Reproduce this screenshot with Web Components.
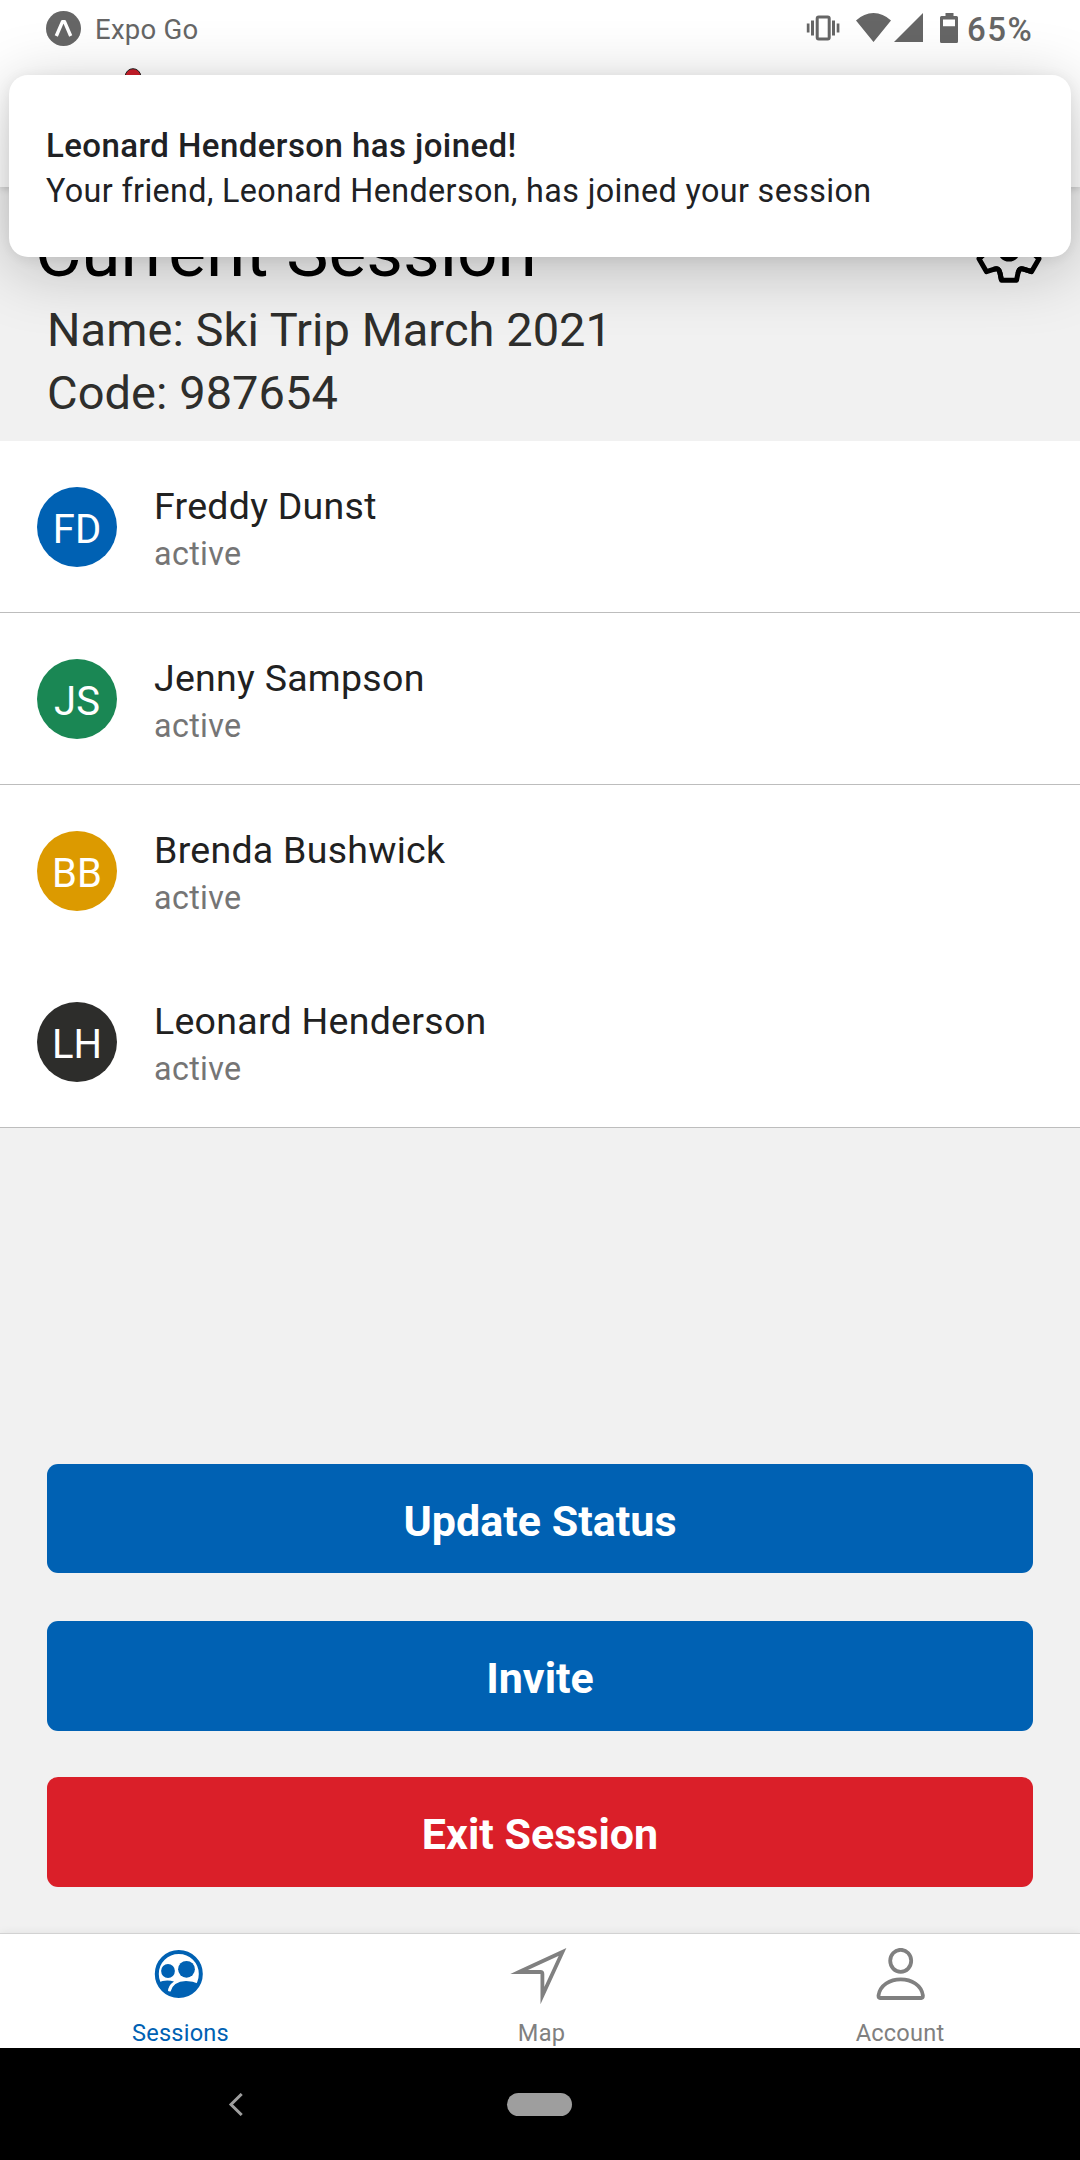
<!DOCTYPE html>
<html lang="en">
<head>
<meta charset="utf-8">
<title>Current Session</title>
<style>
html,body{margin:0;padding:0}
body{width:1080px;height:2160px;overflow:hidden;font-family:Roboto,"Liberation Sans",sans-serif;background:#f1f1f1}
</style>
</head>
<body>
<session-app></session-app>
<script>
const define = (name, html) => customElements.define(name, class extends HTMLElement {
  constructor() {
    super();
    const t = document.createElement('template');
    t.innerHTML = html;
    this.attachShadow({mode: 'open'}).appendChild(t.content.cloneNode(true));
  }
});

define('status-bar', `
<style>
:host{display:flex;height:75px;box-sizing:border-box;padding:0 47px 0 46px;align-items:flex-start;color:#666}
.app{display:flex;align-items:flex-start;gap:14px;font-size:27.5px;line-height:32px;letter-spacing:.25px}
.app svg{margin-top:11px}.app span{margin-top:14px}
.icons{margin-left:auto;margin-top:10px}
.pct{margin:12px 0 0 9px;font-size:33px;line-height:36px;font-weight:500;width:66px;letter-spacing:1.5px;white-space:nowrap}
svg{display:block}
</style>
<div class="app">
<svg width="35" height="35" viewBox="0 0 35 35"><circle cx="17.5" cy="17.5" r="17.5" fill="#666"/><path d="M10.3 25 16.4 10.8H18.6L24.7 25" fill="none" stroke="#fff" stroke-width="3.4" stroke-linejoin="round"/></svg>
<span>Expo Go</span></div>
<svg class="icons" width="152" height="35" viewBox="806 10 152 35" fill="#666">
<rect x="817.2" y="17" width="12" height="22" rx="1.5" fill="none" stroke="#666" stroke-width="3"/>
<path d="M811 20.500h3v15h-3zM832 20.500h3v15h-3zM806.800 23.500h2.700v9h-2.700zM836.700 23.500h2.700v9h-2.700z"/>
<path d="M873.500 42 856 20.500Q864 13 873.500 13T891 20.500zM894 42 923 13V42z"/>
<path fill-rule="evenodd" d="M945.500 13h8v3h3Q958 16 958 17.500V41.500Q958 43 956.500 43H941.500Q940 43 940 41.500V17.500Q940 16 941.500 16h4zM943 19.500V26.300H955V19.500z"/>
</svg>
<span class="pct">65%</span>`);

define('toast-card', `
<style>
:host{display:block;box-sizing:border-box;position:absolute;left:9px;top:75px;width:1062px;height:182px;border-radius:19px;background:#fff;padding:50px 37px;color:#202124;white-space:nowrap;box-shadow:0 12px 66px rgba(0,0,0,.23),0 2px 14px rgba(0,0,0,.07)}
.t{font-size:33px;font-weight:500;line-height:42px;letter-spacing:.43px}
.b{font-size:32.3px;line-height:48px;letter-spacing:.38px}
</style>
<div class="t"><slot name="title"></slot></div><div class="b"><slot></slot></div>`);

define('gear-icon', `
<style>:host{display:block}svg{display:block}</style>
<svg width="70" height="70" viewBox="-35 -35 70 70" fill="none" stroke="#000" stroke-width="5" stroke-linejoin="round">
<defs><path id="k" d="M-15.400 19.300C-11.500 18.100-10 19-9 23L-7.500 30.300H7.500L9 23C10 19 11.500 18.100 15.400 19.300L22.500 21.700"/></defs>
<use href="#k"/><use href="#k" transform="rotate(60)"/><use href="#k" transform="rotate(120)"/><use href="#k" transform="rotate(180)"/><use href="#k" transform="rotate(240)"/><use href="#k" transform="rotate(300)"/><circle r="9"/></svg>`);

define('session-header', `
<style>
:host{display:block;height:254px;box-sizing:border-box;padding-top:20px;color:#2e2e2c}
.top{display:flex;justify-content:space-between;height:91px;padding:0 36px 0 35px;color:#000}
.h{font-size:71.2px;line-height:82px;margin-top:4px;white-space:nowrap}
gear-icon{margin-top:8px}
.l{font-size:47px;line-height:63px;padding-left:47px;letter-spacing:.05px}
</style>
<div class="top"><div class="h">Current Session</div><gear-icon></gear-icon></div>
<div class="l"><slot name="name"></slot></div><div class="l"><slot name="code"></slot></div>`);

define('member-row', `
<style>
:host{display:flex;height:172px;box-sizing:border-box;background:#fff;padding:0 37px;align-items:flex-start;gap:37px;border-bottom:1px solid var(--line,#bdbdbd)}
.a{width:80px;height:80px;margin-top:46px;border-radius:50%;background:var(--c);color:#fff;font-size:40px;line-height:85px;text-align:center}
.x{padding-top:41px;white-space:nowrap}
.n{font-size:37.5px;line-height:48px;color:#212121;letter-spacing:.27px}
.s{font-size:32.3px;line-height:47px;margin-top:1px;color:#757575;letter-spacing:.35px}
</style>
<div class="a"><slot name="initials"></slot></div><div class="x"><div class="n"><slot></slot></div><div class="s">active</div></div>`);

define('action-button', `
<style>
:host{display:block;height:110px;border-radius:11px;background:var(--c,#0061b3);color:#fff;text-align:center;font-weight:700;font-size:43px;line-height:115px}
</style><slot></slot>`);

define('tab-item', `
<style>
:host{display:flex;flex-direction:column;align-items:center;width:360px;color:var(--c,#808080);font-size:23.600px;line-height:28px}
.i{height:70px;padding-top:14px;box-sizing:border-box}
.l{margin-top:15px;padding-left:var(--nudge,0px);letter-spacing:.2px}
</style><div class="i"><slot name="icon"></slot></div><div class="l"><slot></slot></div>`);

define('nav-bar', `
<style>
:host{display:flex;height:112px;background:#000;padding-left:228px;align-items:flex-start;box-sizing:border-box}
svg{display:block;margin-top:45px}
.p{width:65px;height:23px;border-radius:11.500px;background:#9e9e9e;margin:45px 0 0 263px}
</style>
<svg width="16" height="23" viewBox="0 0 16 23"><path d="M13.700 1 3 11.500 13.700 22" fill="none" stroke="#9e9e9e" stroke-width="3"/></svg><div class="p"></div>`);

define('session-app', `
<style>
:host{display:flex;flex-direction:column;position:relative;width:1080px;height:2160px;background:#f1f1f1;overflow:hidden}
.head{height:187px;background:#fff;box-shadow:0 1px 8px rgba(0,0,0,.2);box-sizing:border-box}
.logo{display:block;margin:-7px 0 0 124px}
member-row{flex:none}
member-row:nth-of-type(3){height:171px}
.actions{display:flex;flex-direction:column;padding:336px 47px 0;flex:1}
action-button:nth-of-type(1){height:109px;margin-bottom:48px}
action-button:nth-of-type(2){margin-bottom:46px}
.tabs{display:flex;height:114px;background:#fff;border-top:1px solid #d2d2d2;box-shadow:0 -1px 8px rgba(0,0,0,.06)}
svg{display:block}
</style>
<div class="head"><status-bar></status-bar>
<svg class="logo" width="18" height="18" viewBox="0 0 18 18"><circle cx="9" cy="8.500" r="7.800" fill="#cf1f2b" stroke="#222" stroke-width="1"/></svg></div>
<session-header><span slot="name">Name: Ski Trip March 2021</span><span slot="code">Code: 987654</span></session-header>
<member-row style="--c:#0061b3"><span slot="initials">FD</span>Freddy Dunst</member-row>
<member-row style="--c:#1a8754"><span slot="initials">JS</span>Jenny Sampson</member-row>
<member-row style="--c:#dc9a00;--line:#fff"><span slot="initials">BB</span>Brenda Bushwick</member-row>
<member-row style="--c:#2d2d2b"><span slot="initials">LH</span>Leonard Henderson</member-row>
<div class="actions"><action-button>Update Status</action-button><action-button>Invite</action-button><action-button style="--c:#da1f29">Exit Session</action-button></div>
<div class="tabs">
<tab-item style="--c:#0061b3;--nudge:1px"><svg slot="icon" width="50" height="50" viewBox="154 1948 50 50" style="margin-left:-2px">
<circle cx="178.800" cy="1974" r="22" fill="none" stroke="#0061b3" stroke-width="4"/>
<g fill="#0061b3"><circle cx="168" cy="1971" r="6.900"/><circle cx="186.500" cy="1969.300" r="8.400"/>
<path d="M158 1982.500Q166 1979 174 1981.500 168 1985.500 168 1991.500H170.600Q173 1981.500 186 1981Q193 1981 199 1984Q194 1996 178.800 1996Q163 1995 158 1982.500Z"/></g></svg>Sessions</tab-item>
<tab-item style="--nudge:3px"><svg slot="icon" width="58" height="58" viewBox="510 1948 58 58" style="margin-left:-2px" fill="none" stroke="#808080" stroke-width="3.800" stroke-miterlimit="12"><path d="M519 1972 562.500 1952 542.400 1995.500V1974Q542.400 1972 540.400 1972Z"/></svg>Map</tab-item>
<tab-item><svg slot="icon" width="52" height="54" viewBox="875 1948 52 54" style="margin-left:1px" fill="none" stroke="#808080" stroke-width="3.800" stroke-linejoin="round"><ellipse cx="900.700" cy="1960.800" rx="10.500" ry="11"/><path d="M880 1998Q878.500 1998 878.500 1995.500C880 1985 890 1979.300 900.700 1979.300S921.500 1985 922.900 1995.500Q922.900 1998 921.400 1998Z"/></svg>Account</tab-item>
</div>
<nav-bar></nav-bar>
<toast-card><span slot="title">Leonard Henderson has joined!</span>Your friend, Leonard Henderson, has joined your session</toast-card>`);
</script>
</body>
</html>
